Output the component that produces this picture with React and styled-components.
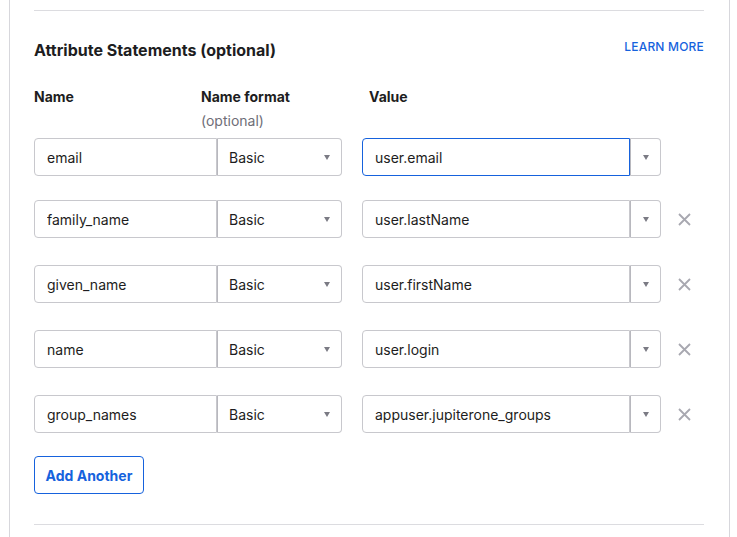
import React from 'react';
import styled, { createGlobalStyle } from 'styled-components';

const GlobalStyle = createGlobalStyle`
  body {
    margin: 0;
    background: #ffffff;
    font-family: Inter, "Liberation Sans", Arial, sans-serif;
    color: #1d1d21;
  }
`;

// Panel and section chrome
const Panel = styled.div`
  box-sizing: border-box;
  width: 721px;
  margin-left: 9px;
  padding: 10px 25px 12px 24px;
  border-left: 1px solid #d7d7dc;
  border-right: 1px solid #d7d7dc;
`;

const Rule = styled.div`
  height: 1px;
  background: #dcdce0;
`;

const SectionHeader = styled.div`
  display: flex;
  justify-content: space-between;
  align-items: flex-start;
  margin-top: 29px;
`;

const Title = styled.h2`
  margin: 0;
  font-size: 16px;
  line-height: 21px;
  font-weight: 700;
`;

const LearnMore = styled.a`
  font-size: 12px;
  line-height: 14px;
  font-weight: 500;
  color: #1662dd;
  text-decoration: none;
  letter-spacing: 0.2px;
`;

const ColumnHeads = styled.div`
  display: grid;
  grid-template-columns: 167px 168px auto;
  margin-top: 26px;
  margin-bottom: 8px;
`;

const ColumnLabel = styled.div`
  font-size: 14px;
  line-height: 20px;
  font-weight: 700;
`;

const Hint = styled.div`
  margin-top: 5px;
  font-size: 14px;
  line-height: 18px;
  color: #6e6e78;
`;

// Attribute row
const Row = styled.div`
  display: flex;
  align-items: center;
  height: 38px;
  margin-bottom: ${p => (p.$first ? '24px' : '27px')};
`;

const NameInput = styled.input`
  box-sizing: border-box;
  width: 183px;
  height: 38px;
  padding: 0 12px;
  border: 1px solid #c8c8cd;
  border-radius: 4px 0 0 4px;
  font: inherit;
  font-size: 14px;
  color: #1d1d21;
  background: #fff;
  outline: none;
`;

const Select = styled.div`
  box-sizing: border-box;
  display: flex;
  align-items: center;
  justify-content: space-between;
  width: 125px;
  height: 38px;
  padding: 0 11px 0 11px;
  border: 1px solid #c8c8cd;
  border-left-color: #b8b8be;
  border-radius: 0 4px 4px 0;
  font-size: 14px;
`;

const Caret = styled.span`
  width: 0;
  height: 0;
  border-left: 3.5px solid transparent;
  border-right: 3.5px solid transparent;
  border-top: 5px solid #7b7b84;
`;

const ValueGroup = styled.div`
  display: flex;
  margin-left: 20px;
`;

const ValueInput = styled.input`
  box-sizing: border-box;
  width: 268px;
  height: 38px;
  padding: 0 12px;
  border: 1px solid ${p => (p.$focused ? '#1662dd' : '#c8c8cd')};
  border-radius: 4px 0 0 4px;
  font: inherit;
  font-size: 14px;
  color: #1d1d21;
  background: #fff;
  outline: none;
`;

const DropButton = styled.div`
  box-sizing: border-box;
  display: flex;
  align-items: center;
  justify-content: center;
  width: 31px;
  height: 38px;
  border: 1px solid #c8c8cd;
  border-left-color: #b8b8be;
  border-radius: 0 4px 4px 0;
`;

const Remove = styled.button`
  display: flex;
  align-items: center;
  justify-content: center;
  width: 20px;
  height: 20px;
  margin-left: 13px;
  padding: 0;
  border: none;
  background: none;
  cursor: pointer;
`;

const AddButton = styled.button`
  box-sizing: border-box;
  display: block;
  width: 110px;
  height: 38px;
  margin-top: -4px;
  margin-bottom: 30px;
  border: 1px solid #1662dd;
  border-radius: 4px;
  background: #fff;
  color: #1662dd;
  font: inherit;
  font-size: 14px;
  font-weight: 700;
  cursor: pointer;
`;

const CloseIcon = () => (
  <svg width="13" height="13" viewBox="0 0 13 13">
    <path d="M1 1 L12 12 M12 1 L1 12" stroke="#a8a8b0" strokeWidth="1.8" />
  </svg>
);

const attributes = [
  { name: 'email', value: 'user.email', focused: true, removable: false },
  { name: 'family_name', value: 'user.lastName', removable: true },
  { name: 'given_name', value: 'user.firstName', removable: true },
  { name: 'name', value: 'user.login', removable: true },
  { name: 'group_names', value: 'appuser.jupiterone_groups', removable: true },
];

export default function App() {
  return (
    <>
      <GlobalStyle />
      <Panel>
        <Rule />
        <SectionHeader>
          <Title>Attribute Statements (optional)</Title>
          <LearnMore href="#">LEARN MORE</LearnMore>
        </SectionHeader>

        <ColumnHeads>
          <ColumnLabel>Name</ColumnLabel>
          <div>
            <ColumnLabel>Name format</ColumnLabel>
            <Hint>(optional)</Hint>
          </div>
          <ColumnLabel>Value</ColumnLabel>
        </ColumnHeads>

        {attributes.map((attr, i) => (
          <Row key={attr.name} $first={i === 0}>
            <NameInput readOnly value={attr.name} />
            <Select>
              Basic
              <Caret />
            </Select>
            <ValueGroup>
              <ValueInput readOnly value={attr.value} $focused={attr.focused} />
              <DropButton>
                <Caret />
              </DropButton>
            </ValueGroup>
            {attr.removable && (
              <Remove aria-label="Remove">
                <CloseIcon />
              </Remove>
            )}
          </Row>
        ))}

        <AddButton>Add Another</AddButton>
        <Rule />
      </Panel>
    </>
  );
}
